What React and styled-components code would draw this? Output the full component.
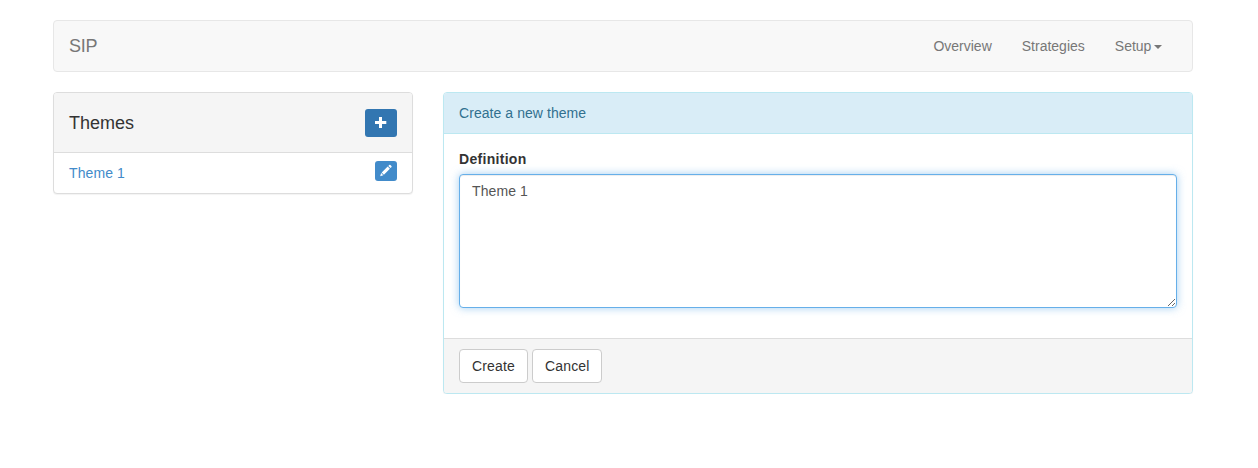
import React from "react";
import styled, { createGlobalStyle } from "styled-components";

const GlobalStyle = createGlobalStyle`
  *, *::before, *::after { box-sizing: border-box; }
  body {
    margin: 0;
    background: #fff;
    color: #333;
    font: 14px/20px "Liberation Sans", Arial, sans-serif;
  }
`;

const Container = styled.div`
  width: 1140px;
  margin: 20px 0 0 53px;
`;

const Navbar = styled.nav`
  display: flex;
  align-items: center;
  justify-content: space-between;
  height: 52px;
  padding: 0 15px;
  margin-bottom: 20px;
  background: #f8f8f8;
  border: 1px solid #e7e7e7;
  border-radius: 4px;
`;

const Brand = styled.a`
  color: #777;
  font-size: 18px;
  letter-spacing: -0.3px;
`;

const NavList = styled.div`
  display: flex;
`;

const NavLink = styled.a`
  display: flex;
  align-items: center;
  padding: 15px;
  color: #777;
`;

const Caret = styled.span`
  margin: 2px 0 0 2.6px;
  border-top: 4px solid #777;
  border-left: 4px solid transparent;
  border-right: 4px solid transparent;
`;

const Columns = styled.div`
  display: grid;
  grid-template-columns: 360px 750px;
  gap: 30px;
  align-items: start;
`;

const Panel = styled.section`
  background: #fff;
  border: 1px solid ${(p) => (p.$info ? "#bce8f1" : "#ddd")};
  border-radius: 4px;
  box-shadow: 0 1px 1px rgba(0, 0, 0, 0.05);
`;

const ListHeading = styled.header`
  display: flex;
  align-items: center;
  justify-content: space-between;
  height: 60px;
  padding: 0 15px;
  background: #f5f5f5;
  border-bottom: 1px solid #ddd;
  border-radius: 3px 3px 0 0;
`;

const Title = styled.h4`
  margin: 0;
  font-size: 18px;
  font-weight: 400;
`;

const ThemeRow = styled.div`
  display: flex;
  align-items: center;
  justify-content: space-between;
  height: 40px;
  padding: 0 15px;
`;

const ThemeLink = styled.a`
  color: #428bca;
  letter-spacing: 0.1px;
`;

const AddButton = styled.button`
  display: flex;
  align-items: center;
  justify-content: center;
  width: 32px;
  height: 28px;
  padding: 0;
  border: 0;
  border-radius: 3px;
  background: #3276b1;
  color: #fff;
`;

const EditButton = styled(AddButton)`
  width: 22px;
  height: 20px;
  margin-bottom: 4px;
  background: #428bca;
`;

const InfoHeading = styled.header`
  padding: 10px 15px;
  color: #31708f;
  background: #d9edf7;
  border-bottom: 1px solid #bce8f1;
  border-radius: 3px 3px 0 0;
  letter-spacing: 0.06px;
`;

const PanelBody = styled.div`
  padding: 15px 15px 30px;
`;

const Label = styled.label`
  display: block;
  margin-bottom: 5px;
  font-weight: 700;
  letter-spacing: 0.3px;
`;

const TextArea = styled.textarea`
  display: block;
  width: 100%;
  height: 134px;
  padding: 6px 12px;
  color: #555;
  font: inherit;
  letter-spacing: 0.1px;
  background: #fff;
  border: 1px solid #66afe9;
  border-radius: 4px;
  outline: 0;
  box-shadow: inset 0 1px 1px rgba(0, 0, 0, 0.075), 0 0 8px rgba(102, 175, 233, 0.6);
`;

const PanelFooter = styled.footer`
  display: flex;
  gap: 4px;
  padding: 10px 15px;
  background: #f5f5f5;
  border-top: 1px solid #ddd;
  border-radius: 0 0 3px 3px;
`;

const Button = styled.button`
  height: 34px;
  width: ${(p) => p.$width}px;
  padding: 6px 0 6px 12px;
  color: #333;
  font: inherit;
  letter-spacing: 0.15px;
  text-align: left;
  background: #fff;
  border: 1px solid #ccc;
  border-radius: 4px;
`;

const PlusIcon = () => (
  <svg width="12" height="12" viewBox="0 0 12 12" fill="currentColor" aria-hidden="true">
    <path d="M4 0h3v4h4.3v3H7v4H4V7H0V4h4z" />
  </svg>
);

const PencilIcon = () => (
  <svg width="14" height="14" viewBox="0 0 14 14" fill="currentColor" aria-hidden="true">
    <path d="M10.2 1q.6-.6 1.2 0l1 1q.6.6 0 1.2l-.9.9-2.2-2.2zM8.7 2.5l2.2 2.2-6 6-2.2-2.2zM2.1 9.1l2.2 2.2-3.1.9z" />
  </svg>
);

export default function App() {
  return (
    <>
      <GlobalStyle />
      <Container>
        <Navbar>
          <Brand>SIP</Brand>
          <NavList>
            <NavLink>Overview</NavLink>
            <NavLink>Strategies</NavLink>
            <NavLink>Setup<Caret /></NavLink>
          </NavList>
        </Navbar>
        <Columns>
          <Panel>
            <ListHeading>
              <Title>Themes</Title>
              <AddButton aria-label="Add theme"><PlusIcon /></AddButton>
            </ListHeading>
            <ThemeRow>
              <ThemeLink>Theme 1</ThemeLink>
              <EditButton aria-label="Edit theme"><PencilIcon /></EditButton>
            </ThemeRow>
          </Panel>
          <Panel $info>
            <InfoHeading>Create a new theme</InfoHeading>
            <PanelBody>
              <Label htmlFor="definition">Definition</Label>
              <TextArea id="definition" defaultValue="Theme 1" />
            </PanelBody>
            <PanelFooter>
              <Button $width={69}>Create</Button>
              <Button $width={70}>Cancel</Button>
            </PanelFooter>
          </Panel>
        </Columns>
      </Container>
    </>
  );
}
